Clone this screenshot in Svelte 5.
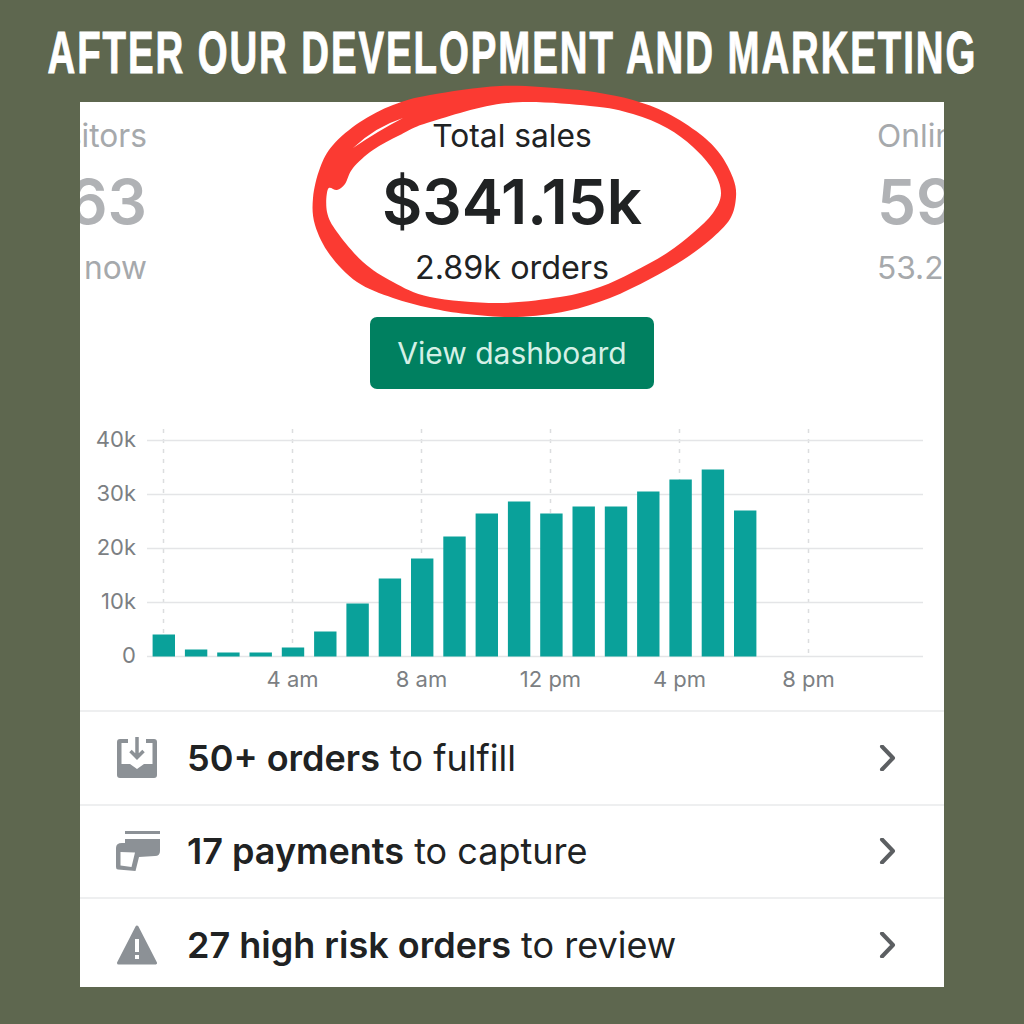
<script>
    // bar tops measured on the 0-216 plot, in pixels above the baseline
    const barHeights = [22, 7, 4, 4, 9, 25, 53, 78, 98, 120, 143, 155, 143, 150, 150, 165, 177, 187, 146];
    const yTicks = ['40k', '30k', '20k', '10k', '0'];
    const xTicks = ['', '4 am', '8 am', '12 pm', '4 pm', '8 pm'];

    const rowH = 54;
    const top = 20.5;
    const base = top + rowH * 4;

    const rows = [
        { icon: 'inbox', strong: '50+ orders', rest: ' to fulfill' },
        { icon: 'card', strong: '17 payments', rest: ' to capture' },
        { icon: 'alert', strong: '27 high risk orders', rest: ' to review' }
    ];

    // hand drawn circle: two closed curves through measured points
    const outer = [
        [313, 198], [315, 225], [330, 255], [357, 282], [393, 298], [430, 308], [467, 314], [517, 317],
        [567, 311], [610, 298], [650, 279], [683, 260], [710, 240], [730, 219], [736, 197], [733, 178],
        [720, 154], [700, 134], [667, 113], [633, 100], [600, 93], [567, 89], [500, 86], [430, 95],
        [393, 105], [360, 122], [333, 145], [320, 168]
    ];
    const inner = [
        [327, 212], [337, 232], [363, 262], [393, 282], [430, 297], [497, 303], [560, 297], [600, 287],
        [633, 272], [667, 253], [693, 233], [713, 213], [721, 193], [713, 170], [693, 147], [667, 128],
        [633, 114], [590, 106], [507, 103], [430, 122], [400, 135], [373, 150], [353, 168], [345, 184],
        [337, 190], [328, 189]
    ];

    function smooth(pts) {
        let d = `M${pts[0][0]},${pts[0][1]}`;
        for (let i = 0; i < pts.length; i++) {
            const p0 = pts[(i - 1 + pts.length) % pts.length];
            const p1 = pts[i];
            const p2 = pts[(i + 1) % pts.length];
            const p3 = pts[(i + 2) % pts.length];
            const c1 = [p1[0] + (p2[0] - p0[0]) / 6, p1[1] + (p2[1] - p0[1]) / 6];
            const c2 = [p2[0] - (p3[0] - p1[0]) / 6, p2[1] - (p3[1] - p1[1]) / 6];
            d += ` C${c1[0]},${c1[1]} ${c2[0]},${c2[1]} ${p2[0]},${p2[1]}`;
        }
        return d + 'Z';
    }

    const ringPath = smooth(outer) + ' ' + smooth(inner);
</script>

<div class="page">
    <h1 class="title"><span>AFTER OUR DEVELOPMENT AND MARKETING</span></h1>

    <main class="card">
        <section class="stats">
            <div class="stat side left">
                <div class="label">Visitors</div>
                <div class="value">263</div>
                <div class="label sub">right now</div>
            </div>
            <div class="stat center">
                <div class="label">Total sales</div>
                <div class="value">$341.15k</div>
                <div class="label sub">2.89k orders</div>
            </div>
            <div class="stat side right">
                <div class="label">Online store</div>
                <div class="value">59</div>
                <div class="label sub">53.2%</div>
            </div>
        </section>

        <button class="dash">View dashboard</button>

        <svg class="chart" viewBox="0 0 864 290" width="864" height="290">
            {#each xTicks as tick, i}
                <line class="vline" x1={83.5 + i * 129} x2={83.5 + i * 129} y1="9" y2={base} />
                {#if tick}
                    <text class="tick" x={83.5 + i * 129} y="267" text-anchor="middle">{tick}</text>
                {/if}
            {/each}
            {#each yTicks as tick, i}
                <line class="hline" x1="67" x2="843" y1={top + i * rowH} y2={top + i * rowH} />
                <text class="tick" x="56" y={top + i * rowH + 6} text-anchor="end">{tick}</text>
            {/each}
            {#each barHeights as h, i}
                <rect class="bar" x={72.6 + i * 32.3} y={base - h} width="22.4" height={h} />
            {/each}
        </svg>

        <ul class="tasks">
            {#each rows as row}
                <li class="task">
                    <span class="task-icon">
                        {#if row.icon === 'inbox'}
                            <svg viewBox="0 0 40 41" width="40" height="41">
                                <path fill="#8c9196" d="M3,2 H11 V6 H4.500 V27 H13 L20,32 L27,27 H35.500 V6 H29 V2 H37 Q40,2 40,5 V38 Q40,41 37,41 H3 Q0,41 0,38 V5 Q0,2 3,2 Z" />
                                <path fill="none" stroke="#8c9196" stroke-width="3.500" d="M20,0 V20 M13.500,14 L20,20.500 L26.500,14" />
                            </svg>
                        {:else if row.icon === 'card'}
                            <svg class="card-icon" viewBox="0 0 46 43" width="46" height="43">
                                <path fill="#8c9196" d="M10,1 H45 V4 H10 Z" />
                                <path fill="#8c9196" fill-rule="evenodd" d="M10,9 H45 V21 Q45,26 40,26 L24,27 L20.500,41 L3,39.500 Q1,39.500 1,37 V18 Q1,13 7,13 H10 Z M5.500,22 V35.500 L16.500,37 L20,22.500 Z" />
                            </svg>
                        {:else}
                            <svg viewBox="0 0 40 40" width="40" height="40">
                                <path fill="#8c9196" stroke="#8c9196" stroke-width="3" stroke-linejoin="round" d="M20,2 L38.500,38 H1.500 Z" />
                                <path fill="#fff" d="M18,14 H22 V27 H18 Z M18,30 H22 V34 H18 Z" />
                            </svg>
                        {/if}
                    </span>
                    <span class="task-text"><b>{row.strong}</b>{row.rest}</span>
                    <svg class="chevron" viewBox="0 0 18 26" width="18" height="26">
                        <path fill="none" stroke="#5c5f62" stroke-width="4" stroke-linecap="round" stroke-linejoin="round" d="M3,1.500 L14,13 L3,24.500" />
                    </svg>
                </li>
            {/each}
        </ul>
    </main>

    <!-- marker scribble sits over the card and the dark band -->
    <svg class="scribble" viewBox="0 0 1024 1024" width="1024" height="1024">
        <path fill="#fb3a32" fill-rule="evenodd" d={ringPath} />
        <path fill="#fff" d="M353,148 Q375,127 403,118 Q378,131 353,148 Z" />
    </svg>
</div>

<style>
    :global(body) {
        margin: 0;
        background: #5e674f;
    }

    .page {
        position: relative;
        width: 1024px;
        height: 1024px;
        display: flex;
        flex-direction: column;
        align-items: center;
        overflow: hidden;
        background: #5e674f;
        font-family: Inter, "Noto Sans", sans-serif;
    }

    .title {
        height: 102px;
        box-sizing: border-box;
        padding-top: 3px;
        margin: 0;
        display: flex;
        align-items: center;
        justify-content: center;
        width: 100%;
        color: #fff;
        font-family: "Liberation Sans", sans-serif;
        font-size: 60px;
        font-weight: 700;
        white-space: nowrap;
    }

    .title span {
        display: block;
        transform: scaleX(0.64);
        letter-spacing: 3px;
        -webkit-text-stroke: 1px #fff;
    }

    .card {
        width: 864px;
        height: 885px;
        background: #fff;
        display: flex;
        flex-direction: column;
        align-items: center;
        overflow: hidden;
    }

    .stats {
        width: 100%;
        display: grid;
        grid-template-columns: 67px 1fr 67px;
        padding-top: 14px;
    }

    .stat {
        display: flex;
        flex-direction: column;
        white-space: nowrap;
        overflow: hidden;
    }

    .center {
        align-items: center;
        color: #202223;
    }

    .left {
        align-items: flex-end;
    }

    .side {
        color: #a6a9ac;
    }

    .label {
        font-size: 31.7px;
        line-height: 40px;
    }

    .value {
        font-size: 62px;
        line-height: 70px;
        margin-top: 11px;
        font-weight: 600;
    }

    .side .value {
        color: #b0b2b5;
    }

    .sub {
        margin-top: 11px;
    }

    .center .sub {
        font-size: 32.3px;
    }

    .dash {
        width: 284px;
        height: 72px;
        margin-top: 29px;
        border: none;
        border-radius: 7px;
        background: #008060;
        color: #d4f0e6;
        font-family: inherit;
        font-size: 30px;
        flex-shrink: 0;
    }

    .chart {
        display: block;
        margin-top: 31px;
        flex-shrink: 0;
    }

    .hline {
        stroke: #e4e5e7;
        stroke-width: 1.5;
    }

    .vline {
        stroke: #dcdddf;
        stroke-width: 1.5;
        stroke-dasharray: 4 6;
    }

    .tick {
        fill: #7c7f83;
        font-size: 22px;
    }

    .bar {
        fill: #0aa19a;
    }

    .tasks {
        list-style: none;
        margin: 0;
        padding: 0;
        width: 100%;
    }

    .task {
        height: 93.6px;
        box-sizing: border-box;
        display: flex;
        align-items: center;
        border-top: 2px solid #eeeff0;
        padding-left: 37px;
        padding-right: 47px;
    }

    .task-icon {
        width: 70px;
        display: flex;
        align-items: center;
    }

    .card-icon {
        margin-left: -2px;
    }

    .task-text {
        flex: 1;
        font-size: 36px;
        color: #202223;
    }

    .task-text b {
        font-weight: 600;
    }

    .scribble {
        position: absolute;
        left: 0;
        top: 0;
        pointer-events: none;
    }
</style>
